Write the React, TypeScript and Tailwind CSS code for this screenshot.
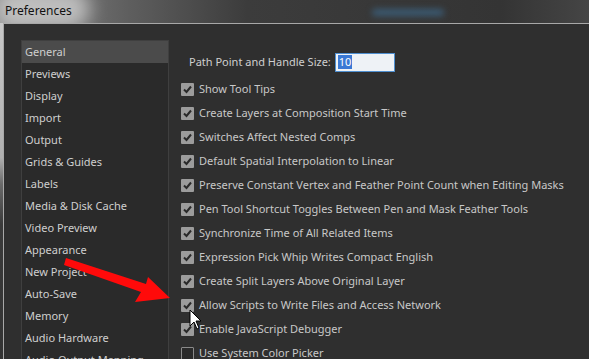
import React from "react";

const cats = [
  "General",
  "Previews",
  "Display",
  "Import",
  "Output",
  "Grids & Guides",
  "Labels",
  "Media & Disk Cache",
  "Video Preview",
  "Appearance",
  "New Project",
  "Auto-Save",
  "Memory",
  "Audio Hardware",
  "Audio Output Mapping",
];

const opts: [string, boolean][] = [
  ["Show Tool Tips", true],
  ["Create Layers at Composition Start Time", true],
  ["Switches Affect Nested Comps", true],
  ["Default Spatial Interpolation to Linear", true],
  ["Preserve Constant Vertex and Feather Point Count when Editing Masks", true],
  ["Pen Tool Shortcut Toggles Between Pen and Mask Feather Tools", true],
  ["Synchronize Time of All Related Items", true],
  ["Expression Pick Whip Writes Compact English", true],
  ["Create Split Layers Above Original Layer", true],
  ["Allow Scripts to Write Files and Access Network", true],
  ["Enable JavaScript Debugger", true],
  ["Use System Color Picker", false],
];

function Box({ checked }: { checked: boolean }) {
  if (!checked)
    return (
      <div className="w-[13px] h-[13px] shrink-0 border border-[#8a8a8a] bg-[#2a2a2a] rounded-[1px]" />
    );
  return (
    <div className="w-[13px] h-[13px] shrink-0 bg-[#9c9c9c] rounded-[1px] flex items-center justify-center">
      <svg width="11" height="11" viewBox="0 0 11 11">
        <path d="M2 5.5 L4.5 8 L9 2.5" fill="none" stroke="#2a2a2a" strokeWidth="2" />
      </svg>
    </div>
  );
}

export default function App() {
  const font = { fontFamily: '"Noto Sans", "Open Sans", sans-serif' };
  return (
    <div
      className="relative w-[589px] h-[359px] overflow-hidden bg-[#2f2f2f] flex flex-col"
      style={font}
    >
      {/* title bar */}
      <div className="relative h-[23px] shrink-0 bg-[linear-gradient(90deg,#8a8a8a_0%,#5e5e5e_22%,#3c3c3c_42%,#343434_85%,#454545_100%)] overflow-hidden">
        <div className="absolute left-[-5px] top-[-12px] w-[95px] h-[42px] rounded-full bg-[#d0d0d0] blur-[9px] opacity-80" />
        <div className="absolute left-[372px] top-[9px] w-[72px] h-[7px] rounded bg-[#3b5b74] blur-[3px]" />
        <div className="relative pl-[5px] pt-[2px] text-[12px] text-[#111] leading-[18px]">
          Preferences
        </div>
      </div>
      <div className="flex flex-1 min-h-0">
        {/* left frame */}
        <div className="w-[3px] shrink-0 bg-[linear-gradient(180deg,#c8c8c8_0%,#b0b0b0_40%,#6a6a6a_48%,#3a3a3a_60%,#333_100%)]" />
        <div className="flex-1 border-l border-t border-[#a8a8a8] bg-[#2f2f2f] flex pl-[17px] pt-[16px]">
          {/* list */}
          <div className="w-[148px] shrink-0 border border-[#3f3f3f] bg-[#2a2a2a] self-start h-[400px]">
            {cats.map((c, i) => (
              <div
                key={c}
                className={`h-[22px] pl-[3px] text-[11px] leading-[22px] whitespace-nowrap text-[#cfcfcf] ${
                  i === 0 ? "bg-[#4b4b4b]" : ""
                }`}
              >
                {c}
              </div>
            ))}
          </div>
          {/* right */}
          <div className="flex-1 pl-[12px] pt-[12px]">
            <div className="flex items-center h-[20px] pl-[8px]">
              <span className="text-[11px] text-[#cfcfcf] whitespace-nowrap">
                Path Point and Handle Size:
              </span>
              <div className="ml-[4px] w-[60px] h-[19px] bg-[#eef2f6] border border-[#4f8fd0] flex items-center pl-[2px]">
                <span className="bg-[#3a78d4] text-white text-[11px] leading-[14px] px-[1px]">10</span>
              </div>
            </div>
            <div className="mt-[5px] flex flex-col">
              {opts.map(([t, c]) => (
                <div key={t} className="h-[24px] flex items-center gap-[5px] whitespace-nowrap">
                  <Box checked={c} />
                  <span className="text-[11px] text-[#c8c8c8]">{t}</span>
                </div>
              ))}
            </div>
          </div>
        </div>
      </div>

      {/* red arrow */}
      <svg className="absolute left-0 top-0" width="589" height="359" viewBox="0 0 589 359">
        <path
          d="M66 258 L146 284 L148 277 L170 298 L135 302 L141 292 L64 265 Z"
          fill="#ff0a0a"
        />
      </svg>
      {/* cursor */}
      <svg className="absolute left-[189px] top-[309px]" width="14" height="22" viewBox="0 0 14 22">
        <path d="M1 1 L1 17 L5 13 L8 20 L10 19 L7 12 L12 12 Z" fill="#fff" stroke="#000" strokeWidth="1" />
      </svg>
    </div>
  );
}
